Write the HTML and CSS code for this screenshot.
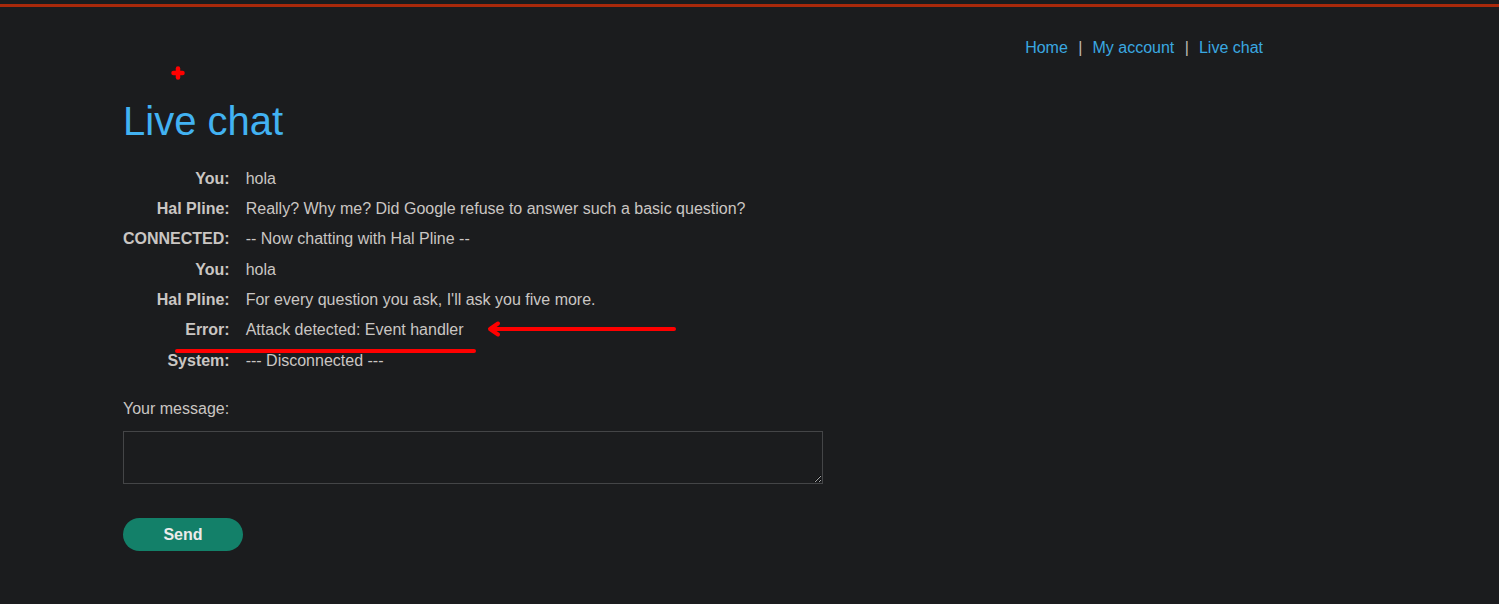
FILE: index.html
```html
<!DOCTYPE html>
<html lang="en">
<head>
<meta charset="utf-8">
<title>Live chat</title>
<link rel="stylesheet" href="styles.css">
</head>
<body>
<div class="topbar"></div>
<div class="page">
  <nav class="nav">
    <a href="#">Home</a><span class="sep">|</span><a href="#">My account</a><span class="sep">|</span><a href="#">Live chat</a>
  </nav>
  <h1 class="title">Live chat</h1>
  <div class="chat">
    <div class="who">You:</div><div class="msg">hola</div>
    <div class="who">Hal Pline:</div><div class="msg">Really? Why me? Did Google refuse to answer such a basic question?</div>
    <div class="who">CONNECTED:</div><div class="msg">-- Now chatting with Hal Pline --</div>
    <div class="who">You:</div><div class="msg">hola</div>
    <div class="who">Hal Pline:</div><div class="msg">For every question you ask, I'll ask you five more.</div>
    <div class="who">Error:</div><div class="msg">Attack detected: Event handler</div>
    <div class="who">System:</div><div class="msg">--- Disconnected ---</div>
  </div>
  <form class="form">
    <label class="label" for="m">Your message:</label>
    <textarea id="m" class="input"></textarea>
    <button type="button" class="send">Send</button>
  </form>
</div>
<svg class="marks" width="1499" height="604" viewBox="0 0 1499 604">
  <g stroke="#ff0000" stroke-linecap="round" fill="none">
    <line x1="173.5" y1="73" x2="182.5" y2="73" stroke-width="4.5"/>
    <line x1="178" y1="68.5" x2="178" y2="77.5" stroke-width="4.5"/>
    <line x1="491" y1="329" x2="674" y2="329" stroke-width="4"/>
    <polyline points="498,323.5 490,329 498,334.5" stroke-linejoin="round" stroke-width="4"/>
    <line x1="177" y1="351" x2="474" y2="351" stroke-width="4"/>
  </g>
</svg>
</body>
</html>
```
FILE: styles.css
```css
html, body {
  margin: 0;
  padding: 0;
}
body {
  background: #1b1c1e;
  font-family: "Liberation Sans", Arial, sans-serif;
  font-size: 16px;
  color: #cac6c3;
  position: relative;
  height: 604px;
  overflow: hidden;
}
.topbar {
  margin-top: 4px;
  height: 3px;
  background: #a9290b;
}
.page {
  width: 1140px;
  margin-left: 123px;
}
.nav {
  display: flex;
  justify-content: flex-end;
  margin-top: 31px;
  line-height: 19px;
}
.nav a {
  color: #3aa8e1;
  text-decoration: none;
}
.sep {
  color: #bdb9b6;
  margin: 0 10px 0 10.5px;
}
.title {
  margin: 41px 0 0 0;
  font-size: 40px;
  font-weight: normal;
  line-height: 46px;
  color: #42b2f2;
}
.chat {
  display: grid;
  grid-template-columns: max-content 1fr;
  grid-auto-rows: 30.33px;
  column-gap: 16px;
  align-items: center;
  margin-top: 19px;
  line-height: 19px;
}
.who {
  font-weight: bold;
  text-align: right;
}
.form {
  display: flex;
  flex-direction: column;
  align-items: flex-start;
  margin-top: 24px;
}
.label {
  line-height: 19px;
}
.input {
  box-sizing: border-box;
  width: 700px;
  height: 53px;
  margin: 13px 0 0 0;
  background: #1b1c1e;
  border: 1px solid #444547;
  color: #cac6c3;
  font-family: inherit;
  font-size: 16px;
}
.send {
  margin-top: 34px;
  width: 120px;
  height: 33px;
  border: none;
  border-radius: 17px;
  background: #138069;
  color: #ebebeb;
  font-family: inherit;
  font-weight: bold;
  font-size: 16px;
  padding: 0;
}
.marks {
  position: absolute;
  left: 0;
  top: 0;
  pointer-events: none;
}
```
